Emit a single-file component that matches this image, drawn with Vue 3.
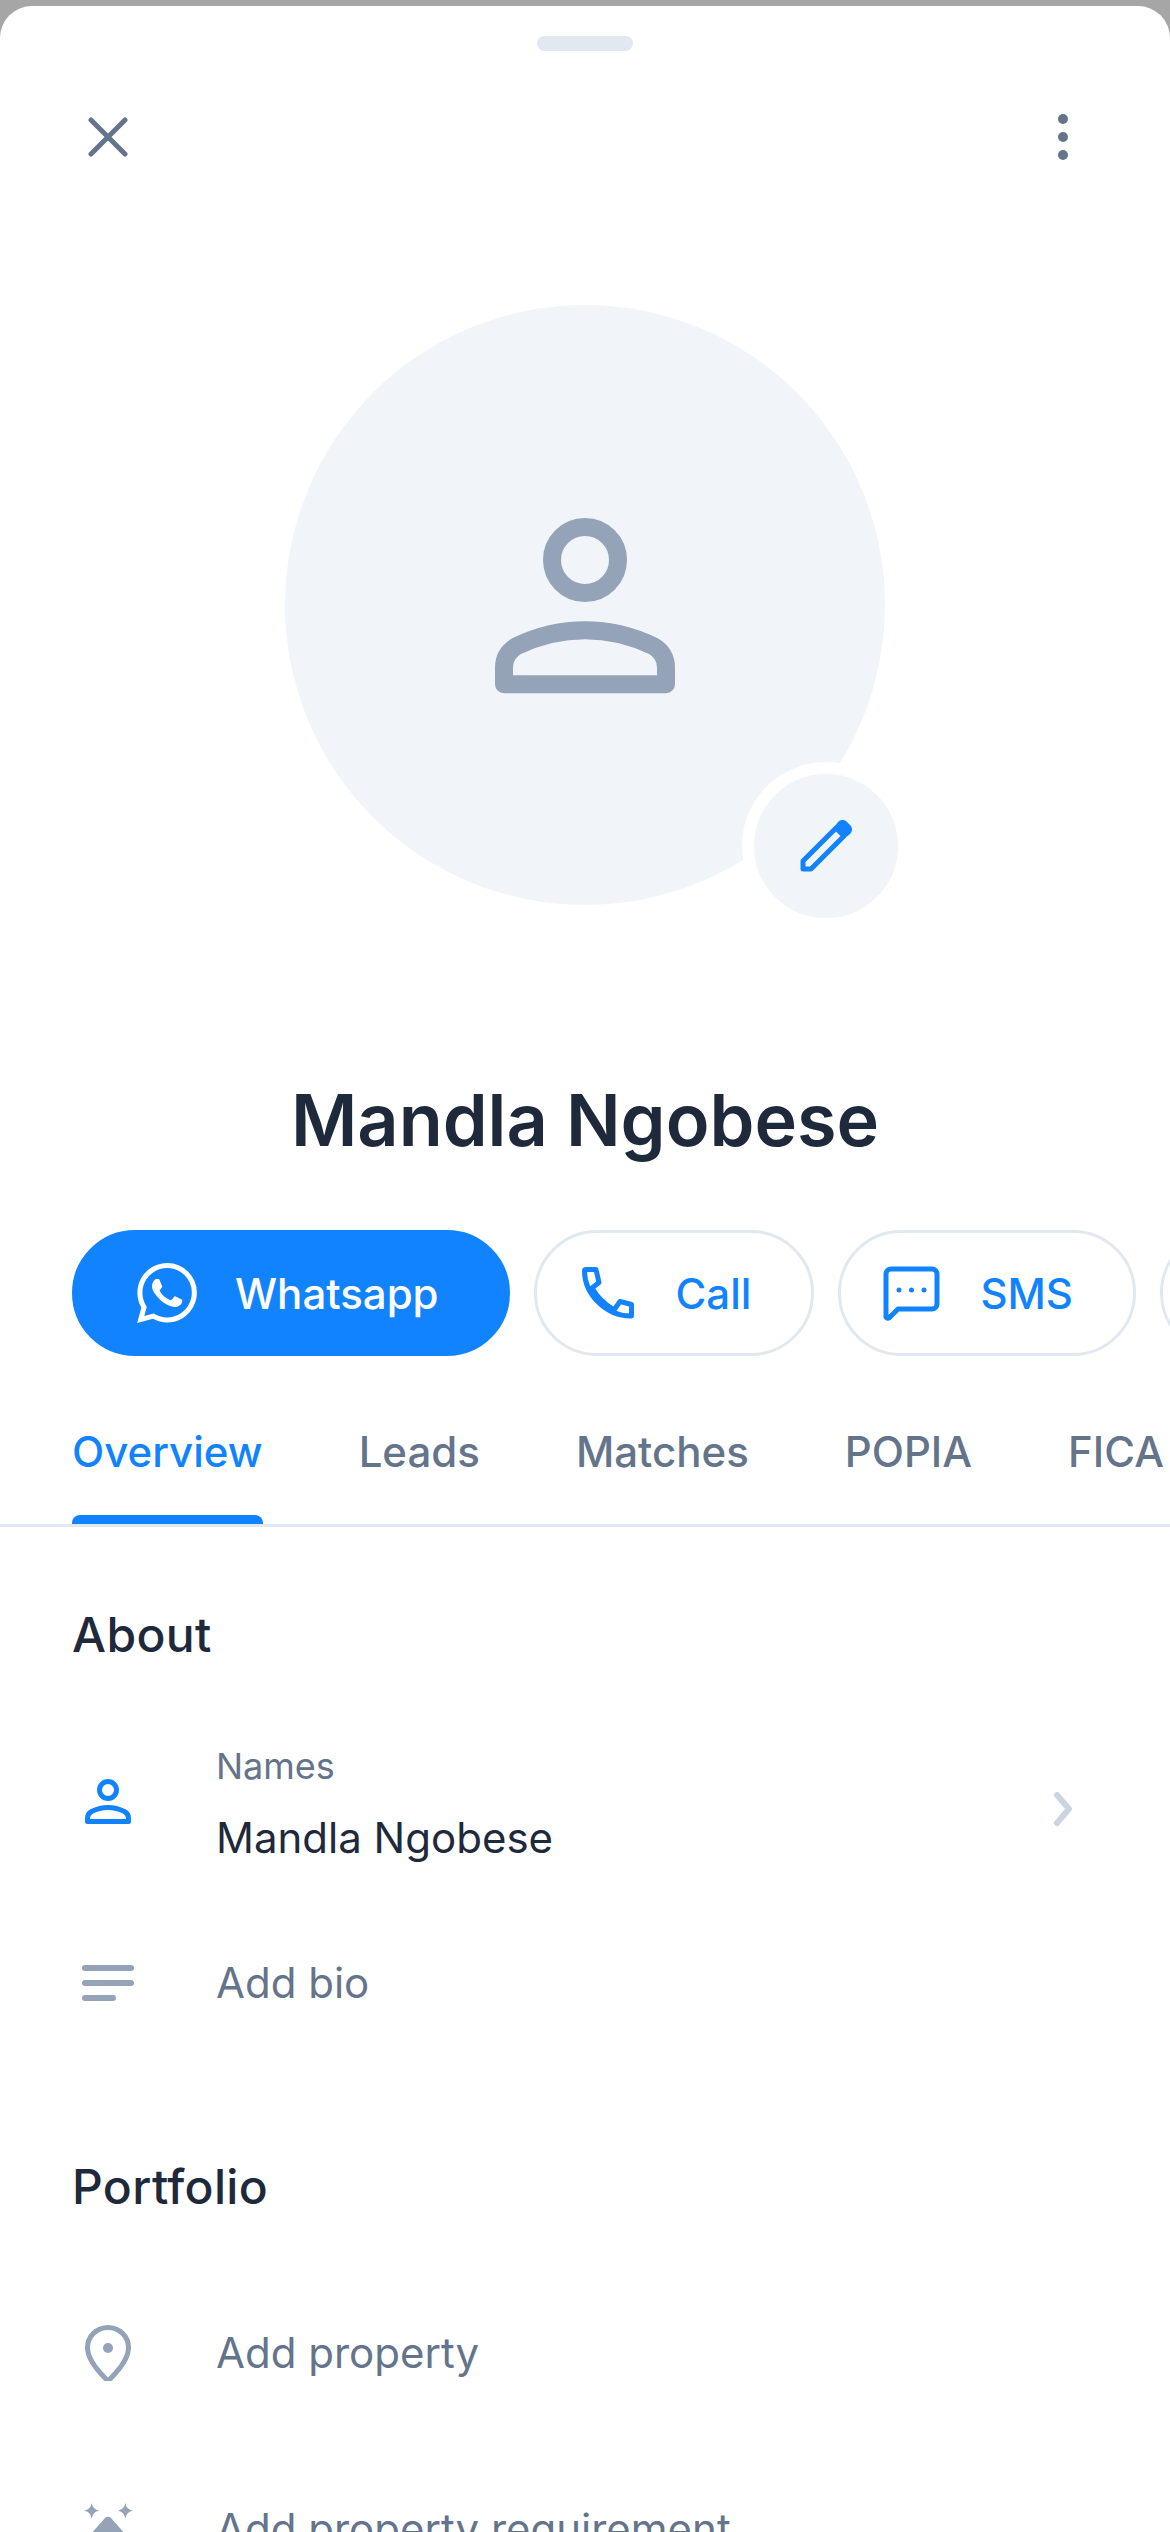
<script setup>
const tabs = ['Overview', 'Leads', 'Matches', 'POPIA', 'FICA']
</script>

<template>
  <div class="screen">
    <div class="sheet">
      <div class="handle"></div>

      <header class="topbar">
        <svg class="close" viewBox="0 0 40 40" fill="none" stroke="#64748b" stroke-width="5" stroke-linecap="round">
          <path d="M3 3l34 34M37 3L3 37" />
        </svg>
        <svg class="more" viewBox="0 0 10 46" fill="#64748b">
          <circle cx="5" cy="5" r="5" />
          <circle cx="5" cy="23" r="5" />
          <circle cx="5" cy="41" r="5" />
        </svg>
      </header>

      <div class="avatar-wrap">
        <div class="avatar">
          <svg class="avatar-icon" viewBox="0 0 24 24" fill="none" stroke="#94a3b8" stroke-width="1.5" stroke-linejoin="round">
            <circle cx="12" cy="8.25" r="2.75" />
            <path d="M5.25 17.2c0-.8.4-1.400 1.100-1.800 1.900-.9 3.700-1.300 5.650-1.300s3.750.4 5.650 1.300c.7.4 1.100 1 1.100 1.800v1.400H5.250z" />
          </svg>
        </div>
        <button class="edit">
          <svg viewBox="0 0 52 52" fill="none" stroke="#1283ff" stroke-width="5" stroke-linejoin="round">
            <path d="M3 49v-8L36 8l8 8-33 33z" />
            <path d="M38 6l2-2.500a3.500 3.500 0 015 0l3.500 3.500a3.500 3.500 0 010 5L46 14z" fill="#1283ff" />
          </svg>
        </button>
      </div>

      <h1 class="name">Mandla Ngobese</h1>

      <div class="actions">
        <button class="pill primary">
          <svg class="pill-icon" viewBox="0 0 24 24" fill="#fff">
            <path d="M17.472 14.382c-.297-.149-1.758-.867-2.03-.967-.273-.099-.471-.148-.67.15-.197.297-.767.966-.94 1.164-.173.199-.347.223-.644.075-.297-.15-1.255-.463-2.39-1.475-.883-.788-1.48-1.761-1.653-2.059-.173-.297-.018-.458.13-.606.134-.133.298-.347.446-.52.149-.174.198-.298.298-.497.099-.198.05-.371-.025-.52-.075-.149-.669-1.612-.916-2.207-.242-.579-.487-.5-.669-.51-.173-.008-.371-.01-.57-.01-.198 0-.52.074-.792.372-.272.297-1.04 1.016-1.04 2.479 0 1.462 1.065 2.875 1.213 3.074.149.198 2.096 3.2 5.077 4.487.709.306 1.262.489 1.694.625.712.227 1.36.195 1.871.118.571-.085 1.758-.719 2.006-1.413.248-.694.248-1.289.173-1.413-.074-.124-.272-.198-.57-.347m-5.421 7.403h-.004a9.87 9.87 0 01-5.031-1.378l-.361-.214-3.741.982.998-3.648-.235-.374a9.86 9.86 0 01-1.51-5.26c.001-5.45 4.436-9.884 9.888-9.884 2.64 0 5.122 1.03 6.988 2.898a9.825 9.825 0 012.893 6.994c-.003 5.45-4.437 9.884-9.885 9.884m8.413-18.297A11.815 11.815 0 0012.05 0C5.495 0 .16 5.335.157 11.892c0 2.096.547 4.142 1.588 5.945L.057 24l6.305-1.654a11.882 11.882 0 005.683 1.448h.005c6.554 0 11.89-5.335 11.893-11.893a11.821 11.821 0 00-3.48-8.413z" />
          </svg>
          <span>Whatsapp</span>
        </button>
        <button class="pill">
          <svg class="pill-icon" viewBox="-4 -4 60 60" fill="none" stroke="#1283ff" stroke-width="5" stroke-linejoin="round">
            <path d="M2.500 4a1.500 1.500 0 011.500-1.500h10l3 13-7 5.500c5 9 12 16 22 22l6-8.500 11.500 3v11.500C24.500 49.500 2.500 27.500 2.500 4z" />
          </svg>
          <span>Call</span>
        </button>
        <button class="pill">
          <svg class="pill-icon" viewBox="-1 -3 60 60" fill="none" stroke="#1283ff" stroke-width="5" stroke-linejoin="round">
            <path d="M3 8a5 5 0 015-5h41a5 5 0 015 5v30a5 5 0 01-5 5H15l-9 9a2 2 0 01-3-1z" />
            <circle cx="16" cy="24" r="2.500" fill="#1283ff" stroke="none" />
            <circle cx="28.500" cy="24" r="2.500" fill="#1283ff" stroke="none" />
            <circle cx="41" cy="24" r="2.500" fill="#1283ff" stroke="none" />
          </svg>
          <span>SMS</span>
        </button>
        <button class="pill"></button>
      </div>

      <nav class="tabs">
        <div v-for="(tab, i) in tabs" :key="tab" class="tab" :class="{ active: i === 0 }">{{ tab }}</div>
      </nav>

      <section class="section">
        <h2>About</h2>
        <div class="row names">
          <div class="row-icon">
            <svg class="person" viewBox="0 0 46 46" fill="none" stroke="#1283ff" stroke-width="5" stroke-linejoin="round">
              <circle cx="23" cy="11" r="8.500" />
              <path d="M2.500 39c0-3 1.500-5 4-6.500 5-2.500 11-4 16.500-4s11.500 1.500 16.500 4c2.500 1.500 4 3.500 4 6.500v3.500h-41z" />
            </svg>
          </div>
          <div class="row-text">
            <div class="label">Names</div>
            <div class="value">Mandla Ngobese</div>
          </div>
          <svg class="chevron" viewBox="0 0 24 40" fill="none" stroke="#cbd5e1" stroke-width="6" stroke-linecap="round" stroke-linejoin="round">
            <path d="M6 6l12 14L6 34" />
          </svg>
        </div>
        <div class="row add">
          <div class="row-icon">
            <svg class="lines" viewBox="0 0 52 36" fill="#94a3b8">
              <rect x="0" y="0" width="52" height="6" rx="3" />
              <rect x="0" y="15" width="52" height="6" rx="3" />
              <rect x="0" y="30" width="34" height="6" rx="3" />
            </svg>
          </div>
          <span class="add-text">Add bio</span>
        </div>
      </section>

      <section class="section portfolio">
        <h2>Portfolio</h2>
        <div class="row add property">
          <div class="row-icon">
            <svg class="pin" viewBox="0 0 46 56" fill="none" stroke="#94a3b8" stroke-width="5" stroke-linejoin="round">
              <path d="M23 2.500C11.500 2.500 2.500 11.500 2.500 22.500c0 9 8 21 18 31a3 3 0 005 0c10-10 18-22 18-31C43.500 11.500 34.500 2.500 23 2.500z" />
              <circle cx="23" cy="23" r="5" fill="#94a3b8" stroke="none" />
            </svg>
          </div>
          <span class="add-text">Add property</span>
        </div>
        <div class="row add requirement">
          <div class="row-icon">
            <svg class="sparkle" viewBox="0 0 49 52" fill="#94a3b8">
              <path d="M7.700 0Q8.700 6.700 15.400 7.700 8.700 8.700 7.700 15.400 6.700 8.700 0 7.700 6.700 6.700 7.700 0z" />
              <path d="M41.300 0Q42.300 6.700 49 7.700 42.300 8.700 41.300 15.400 40.300 8.700 33.600 7.700 40.300 6.700 41.300 0z" />
              <path d="M21 15a4 4 0 016 0l15 17-18 20-18-20z" />
            </svg>
          </div>
          <span class="add-text">Add property requirement</span>
        </div>
      </section>
    </div>
  </div>
</template>

<style scoped>
.screen {
  width: 1170px;
  height: 2532px;
  overflow: hidden;
  background: #a6a6a6;
  padding-top: 6px;
  box-sizing: border-box;
  font-family: Inter, "Noto Sans", sans-serif;
}

.sheet {
  height: 2526px;
  background: #fff;
  border-radius: 32px 32px 0 0;
  overflow: hidden;
}

.handle {
  width: 96px;
  height: 15px;
  margin: 30px auto 0;
  border-radius: 8px;
  background: #e2e8f0;
}

.topbar {
  display: flex;
  justify-content: space-between;
  align-items: center;
  padding: 63px 102px 0 88px;
}

.close {
  width: 40px;
  height: 40px;
}

.more {
  width: 10px;
  height: 46px;
}

.avatar-wrap {
  position: relative;
  width: 600px;
  height: 600px;
  margin: 145px auto 0;
}

.avatar {
  width: 600px;
  height: 600px;
  border-radius: 50%;
  background: #f1f5f9;
  display: flex;
  align-items: center;
  justify-content: center;
}

.avatar-icon {
  width: 288px;
  height: 288px;
}

.edit {
  position: absolute;
  left: 457px;
  top: 457px;
  width: 168px;
  height: 168px;
  padding: 0;
  border: 12px solid #fff;
  border-radius: 50%;
  background: #f1f5f9;
  box-sizing: border-box;
  display: flex;
  align-items: center;
  justify-content: center;
}

.edit svg {
  width: 52px;
  height: 52px;
}

.name {
  margin: 170px 0 0;
  text-align: center;
  font-size: 72px;
  line-height: 90px;
  font-weight: 600;
  color: #1e293b;
}

.actions {
  display: flex;
  gap: 24px;
  margin-top: 65px;
  padding-left: 72px;
}

.pill {
  flex: none;
  height: 126px;
  min-width: 200px;
  padding: 0 60px 0 41px;
  display: flex;
  align-items: center;
  gap: 38px;
  border: 3px solid #e2e8f0;
  border-radius: 63px;
  background: #fff;
  color: #1283ff;
  font-family: inherit;
  font-size: 42px;
  font-weight: 500;
  box-sizing: border-box;
}

.pill.primary {
  padding: 0 68px 0 62px;
  background: #1283ff;
  border-color: #1283ff;
  color: #fff;
}

.pill-icon {
  width: 60px;
  height: 60px;
}

.tabs {
  display: flex;
  gap: 96px;
  margin-top: 60px;
  padding-left: 72px;
  border-bottom: 3px solid #e2e8f0;
  white-space: nowrap;
}

.tab {
  flex: none;
  height: 108px;
  box-sizing: border-box;
  padding-top: 12px;
  line-height: 48px;
  font-size: 42px;
  font-weight: 500;
  color: #64748b;
  border-bottom: 9px solid transparent;
}

.tab.active {
  color: #1283ff;
  position: relative;
}

.tab.active::after {
  content: "";
  position: absolute;
  left: 0;
  right: 0;
  bottom: -9px;
  height: 9px;
  background: #1283ff;
  border-radius: 8px 8px 0 0;
}

.section {
  padding: 78px 72px 0;
}

.portfolio {
  padding-top: 147px;
}

h2 {
  margin: 0;
  font-size: 48px;
  line-height: 60px;
  font-weight: 500;
  letter-spacing: 0.35px;
  color: #1e293b;
}

.row {
  display: flex;
  align-items: center;
}

.row-icon {
  flex: none;
  width: 72px;
  margin-right: 72px;
  display: flex;
  justify-content: center;
}

.person {
  width: 46px;
  height: 46px;
}

.lines {
  width: 52px;
  height: 36px;
}

.pin {
  width: 46px;
  height: 56px;
}

.sparkle {
  width: 49px;
  height: 52px;
}

.names {
  margin-top: 77px;
}

.row-text {
  flex: 1;
}

.label {
  font-size: 36px;
  line-height: 48px;
  color: #64748b;
}

.value {
  margin-top: 24px;
  font-size: 42px;
  line-height: 48px;
  color: #1e293b;
}

.chevron {
  width: 24px;
  height: 40px;
  margin: 13px 23px 0 0;
}

.add {
  margin-top: 94px;
}

.add.property {
  margin-top: 108px;
}

.add.requirement {
  margin-top: 121px;
}

.add-text {
  font-size: 42px;
  line-height: 54px;
  color: #64748b;
}
</style>

<style>
html,
body {
  margin: 0;
  background: #a6a6a6;
}
</style>
